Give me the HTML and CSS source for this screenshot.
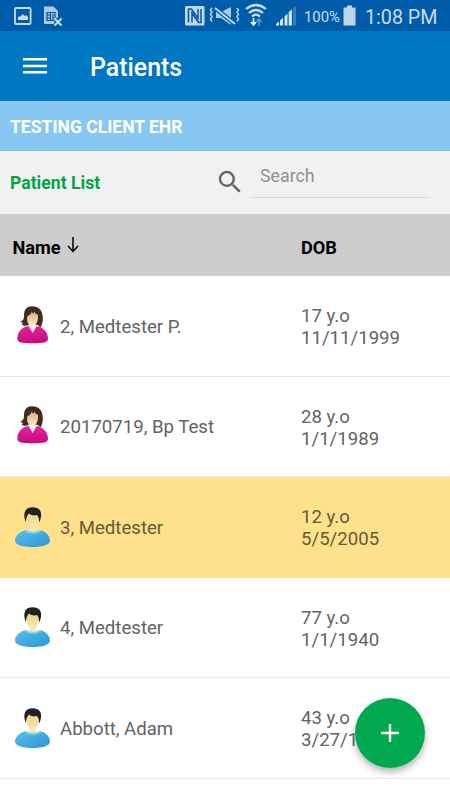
FILE: index.html
```html
<!DOCTYPE html>
<html lang="en">
<head>
<meta charset="utf-8">
<title>Patients</title>
<link rel="stylesheet" href="styles.css">
</head>
<body>
<svg class="defs" width="0" height="0" aria-hidden="true">
  <defs>
    <linearGradient id="skin" x1="0" y1="0" x2="0" y2="1"><stop offset="0" stop-color="#dcae78"/><stop offset=".7" stop-color="#fff1dc"/></linearGradient>
    <linearGradient id="skinM" x1="0" y1="0" x2="0" y2="1"><stop offset="0" stop-color="#ead184"/><stop offset="1" stop-color="#fbedc0"/></linearGradient>
    <linearGradient id="pink" x1="0" y1="0" x2="0" y2="1"><stop offset="0" stop-color="#e323a0"/><stop offset="1" stop-color="#c50c7c"/></linearGradient>
    <linearGradient id="blue" x1="0" y1="0" x2="1" y2="1"><stop offset="0" stop-color="#59bfeb"/><stop offset="1" stop-color="#2b96d5"/></linearGradient>
    <symbol id="female" viewBox="0 0 40 42">
      <path d="M20 2.300c-6 0-8 4-8 9.500 0 3-.8 5-3.500 5.700.7 1 1.500 1.200 2.500 1.200-.5 1-1 1.500-1.500 1.700 2.500 1.800 5.500 1.500 6.500.3h9.500c1.500 1.500 2.500 2.300 3.300 2.300 1.300-2.500 2.200-5 2-9.500C30.500 6.500 27 2.300 20 2.300z" fill="#432b24"/>
      <path d="M15.500 12c2-.5 3.500-2 4.300-4.500.7 1.500 1 2 1.500 2.300l1-2c1 1.500 2.500 2.700 3.700 3.200.2 4-.5 7.300-2.500 9.500V23l-3.200 6-3.300-6v-2.500c-2-2.500-2.300-5-1.500-8.500z" fill="url(#skin)"/>
      <path d="M16.500 22 20.700 29l4-7c7.500 1.500 11.300 7 11.300 12.500 0 4-4 4.800-15.300 4.800S5.300 38.500 5.300 34.500C5.500 28 9.500 23 16.500 22z" fill="url(#pink)"/>
    </symbol>
    <symbol id="male" viewBox="0 0 40 42">
      <path d="M14 12c0-4 3-6 6.700-6S27.300 8 27.300 12c0 4.500-1 8-3.500 10v4l-3.100 2-3.200-2v-4c-2.500-2-3.500-5.500-3.500-10z" fill="url(#skinM)"/>
      <path d="M13.700 17C10.500 8 13 2.200 20.500 2.200 28.500 2.200 31 7.500 27.800 16.500L27.200 17c-.2-3.500-.8-5.500-2.200-7-3 1-6 .2-8-1.500-2 2-2.800 4.500-3.300 8.500z" fill="#202124"/>
      <path d="M14 25c5 3 9 3 14 0 6 1.500 10 5.500 10 10.500C38 40 30 42 20.500 42S3 40 3 35.500C3 30.500 8 26.500 14 25z" fill="url(#blue)"/>
      <path d="M14.500 24.800c3 2.600 10 2.600 13 0l2 .9c-3 4-14.500 4-17 0z" fill="#83dadc"/>
    </symbol>
  </defs>
</svg>

<main class="app">
  <header>
    <div class="status">
      <svg class="status-icons" width="50" height="31" viewBox="0 0 50 31">
        <rect x="1" y="8" width="15.600" height="16" rx="1" fill="none" stroke="#c6ddef" stroke-width="1.800"/>
        <path d="M4 20v-3l3-1 1.500-2 2 2 1.500-1 2 2v3z" fill="#c6ddef"/>
        <path d="M30 6.500h9.500L44 11v7l-3 1-1 5H30z" fill="#a9cbe7"/>
        <path d="M33 12.500h8v8h-8zM33 15h3M33 18h3M36.500 12v9M39 14v7" fill="none" stroke="#07539a" stroke-width="1.200"/>
        <path d="m41 19 6.500 6.500m0-6.500L41 25.500" stroke="#005ca8" stroke-width="4"/>
        <path d="m40.500 18.500 7 7m0-7L40.500 25.500" stroke="#c6ddef" stroke-width="2"/>
      </svg>
      <svg class="status-icons" width="113" height="31" viewBox="185 0 113 31">
        <rect x="185" y="6" width="19.500" height="19.500" rx="1.500" fill="#c0d9ed"/>
        <path d="M188.500 22.500V9h3l6.500 9.500V9M192 22.500V13l6.500 9.500h2.500V9" fill="none" stroke="#07559d" stroke-width="1.500"/>
        <path d="M216 12h5l10-5v18l-10-7h-5z" fill="#a9cbe7"/>
        <path d="m215 8 20 16" stroke="#005ca8" stroke-width="4.500"/>
        <path d="m215 8 20 16" stroke="#c0d9ed" stroke-width="2"/>
        <path d="m212 8-1.500 2 1.500 2-1.500 2.500 1.500 2-1.500 2.500 1.500 2.500m25-13.500 1.500 2-1.500 2 1.500 2.500-1.500 2 1.500 2.500-1.500 2.500" fill="none" stroke="#b5d1e8" stroke-width="1.500"/>
        <path d="M246 9q10-8 20 0M249 13q7-6 14 0M252 16.500q4-4 8 0" fill="none" stroke="#c6ddef" stroke-width="2.200"/>
        <path d="M253.500 18v7m-2.500-3 2.500 3 2.500-3" fill="none" stroke="#fff" stroke-width="1.500"/>
        <path d="M259 26v-7m-2.500 3 2.500-3 2.500 3" fill="none" stroke="#5b9bce" stroke-width="1.500"/>
        <path d="M276 25.500v-1.500l3-2.500v4zM280 25.500v-5l3-3v8zM284.500 25.500v-9l3-3v12zM288.700 25.500V12.300l3.200-3v16.200z" fill="#d5e6f3"/>
        <path d="M293 25.500V8.300l3-2.300v19.500z" fill="#347fbd"/>
      </svg>
      <span class="battery-text">100%</span>
      <svg class="battery" width="14" height="31" viewBox="0 0 14 31"><path d="M.5 7.500H4v-2h5v2h3.500v18H.5z" fill="#bfd6ea"/></svg>
      <span class="clock">1:08 PM</span>
    </div>
    <div class="toolbar">
      <svg width="24" height="18" viewBox="0 0 24 18"><path d="M0 2.300h24M0 9h24M0 15.300h24" stroke="#fff" stroke-width="2.400"/></svg>
      <h1>Patients</h1>
    </div>
  </header>
  <div class="client">TESTING CLIENT EHR</div>
  <div class="filter">
    <h2>Patient List</h2>
    <svg class="search-icon" width="30" height="30" viewBox="0 0 24 24"><path d="M15.500 14h-.79l-.28-.27A6.471 6.471 0 0 0 16 9.500 6.500 6.500 0 1 0 9.500 16c1.610 0 3.090-.59 4.230-1.570l.27.28v.79l5 4.990L20.490 19l-4.990-5zm-6 0C7.010 14 5 11.990 5 9.500S7.010 5 9.500 5 14 7.010 14 9.500 11.990 14 9.500 14z" fill="#666"/></svg>
    <div class="field">Search</div>
  </div>
  <div class="columns">
    <div class="name-head"><span>Name</span><svg width="12" height="18" viewBox="0 0 12 18"><path d="M6 1v14.500M1 10l5 5.500 5-5.500" fill="none" stroke="#000" stroke-width="1.500"/></svg></div>
    <div class="dob-head">DOB</div>
  </div>
  <section>
    <div class="row"><svg class="avatar"><use href="#female"/></svg><div class="name">2, Medtester P.</div><div class="dob">17 y.o<br>11/11/1999</div></div>
    <div class="row"><svg class="avatar"><use href="#female"/></svg><div class="name">20170719, Bp Test</div><div class="dob">28 y.o<br>1/1/1989</div></div>
    <div class="row selected"><svg class="avatar"><use href="#male"/></svg><div class="name">3, Medtester</div><div class="dob">12 y.o<br>5/5/2005</div></div>
    <div class="row"><svg class="avatar"><use href="#male"/></svg><div class="name">4, Medtester</div><div class="dob">77 y.o<br>1/1/1940</div></div>
    <div class="row"><svg class="avatar"><use href="#male"/></svg><div class="name">Abbott, Adam</div><div class="dob">43 y.o<br>3/27/1</div></div>
  </section>
  <button class="fab" aria-label="Add"><svg width="18" height="18" viewBox="0 0 18 18"><path d="M9 0v18M0 9h18" stroke="#fff" stroke-width="2.400"/></svg></button>
</main>
</body>
</html>
```
FILE: styles.css
```css
* { box-sizing: border-box; }
body { margin: 0; background: #fff; font-family: Roboto, sans-serif; }
.defs { position: absolute; }
.app { position: relative; width: 450px; height: 800px; overflow: hidden; }
.status { display: flex; align-items: center; height: 31px; padding-left: 14px; background: #005ca8; color: #c6ddef; }
.status svg { flex: none; }
.status-icons + .status-icons { margin-left: 121px; }
.battery-text { width: 40px; margin-left: 6px; font-size: 14.800px; line-height: 31px; padding-top: 3px; }
.battery { margin-left: -1px; }
.clock { margin-left: 8px; padding-top: 3px; font-size: 19.700px; line-height: 29px; white-space: nowrap; }
.toolbar { display: flex; align-items: center; height: 70px; padding: 0 0 0 23px; background: #0077c2; }
h1 { margin: 3px 0 0 43px; color: #fff; font-size: 24.900px; font-weight: 500; line-height: 31px; }
.client { height: 50px; padding: 1px 0 0 10px; background: #87c7f2; color: #fff; font-size: 17.550px; font-weight: 700; line-height: 50px; }
.filter { display: flex; height: 63px; padding-left: 10px; background: #f1f1f1; }
h2 { width: 205px; margin: 1px 0 0; color: #00a545; font-size: 17.600px; font-weight: 700; line-height: 63px; }
.search-icon { margin-top: 16px; }
.field { width: 180px; height: 47px; margin-left: 5px; padding: 1px 0 0 10px; border-bottom: 1px solid #dadada; color: #929292; font-size: 17.800px; line-height: 48px; }
.columns { display: flex; align-items: center; height: 62px; padding: 4px 0 0 12.500px; background: #ccc; color: #000; font-size: 18.200px; font-weight: 700; }
.name-head { display: flex; align-items: center; gap: 6px; width: 288.500px; }
.name-head svg { margin-top: -4px; }
.row { display: flex; align-items: center; height: 100.500px; padding-left: 12px; border-bottom: 1px solid #e9e9e9; color: #636363; font-size: 18.620px; line-height: 22px; }
.selected { background: #ffe08b; border-color: #ffe08b; color: #665a38; }
.avatar { width: 40px; height: 42px; margin-bottom: 2px; }
.name { width: 241px; margin-left: 8px; padding-top: 2px; }
.dob { padding-top: 3px; }
.fab { position: absolute; left: 355px; top: 698px; display: grid; place-items: center; width: 70px; height: 70px; padding: 0; border: 0; border-radius: 50%; background: #00a850; box-shadow: 0 4px 7px rgba(0, 0, 0, .3); }
```
